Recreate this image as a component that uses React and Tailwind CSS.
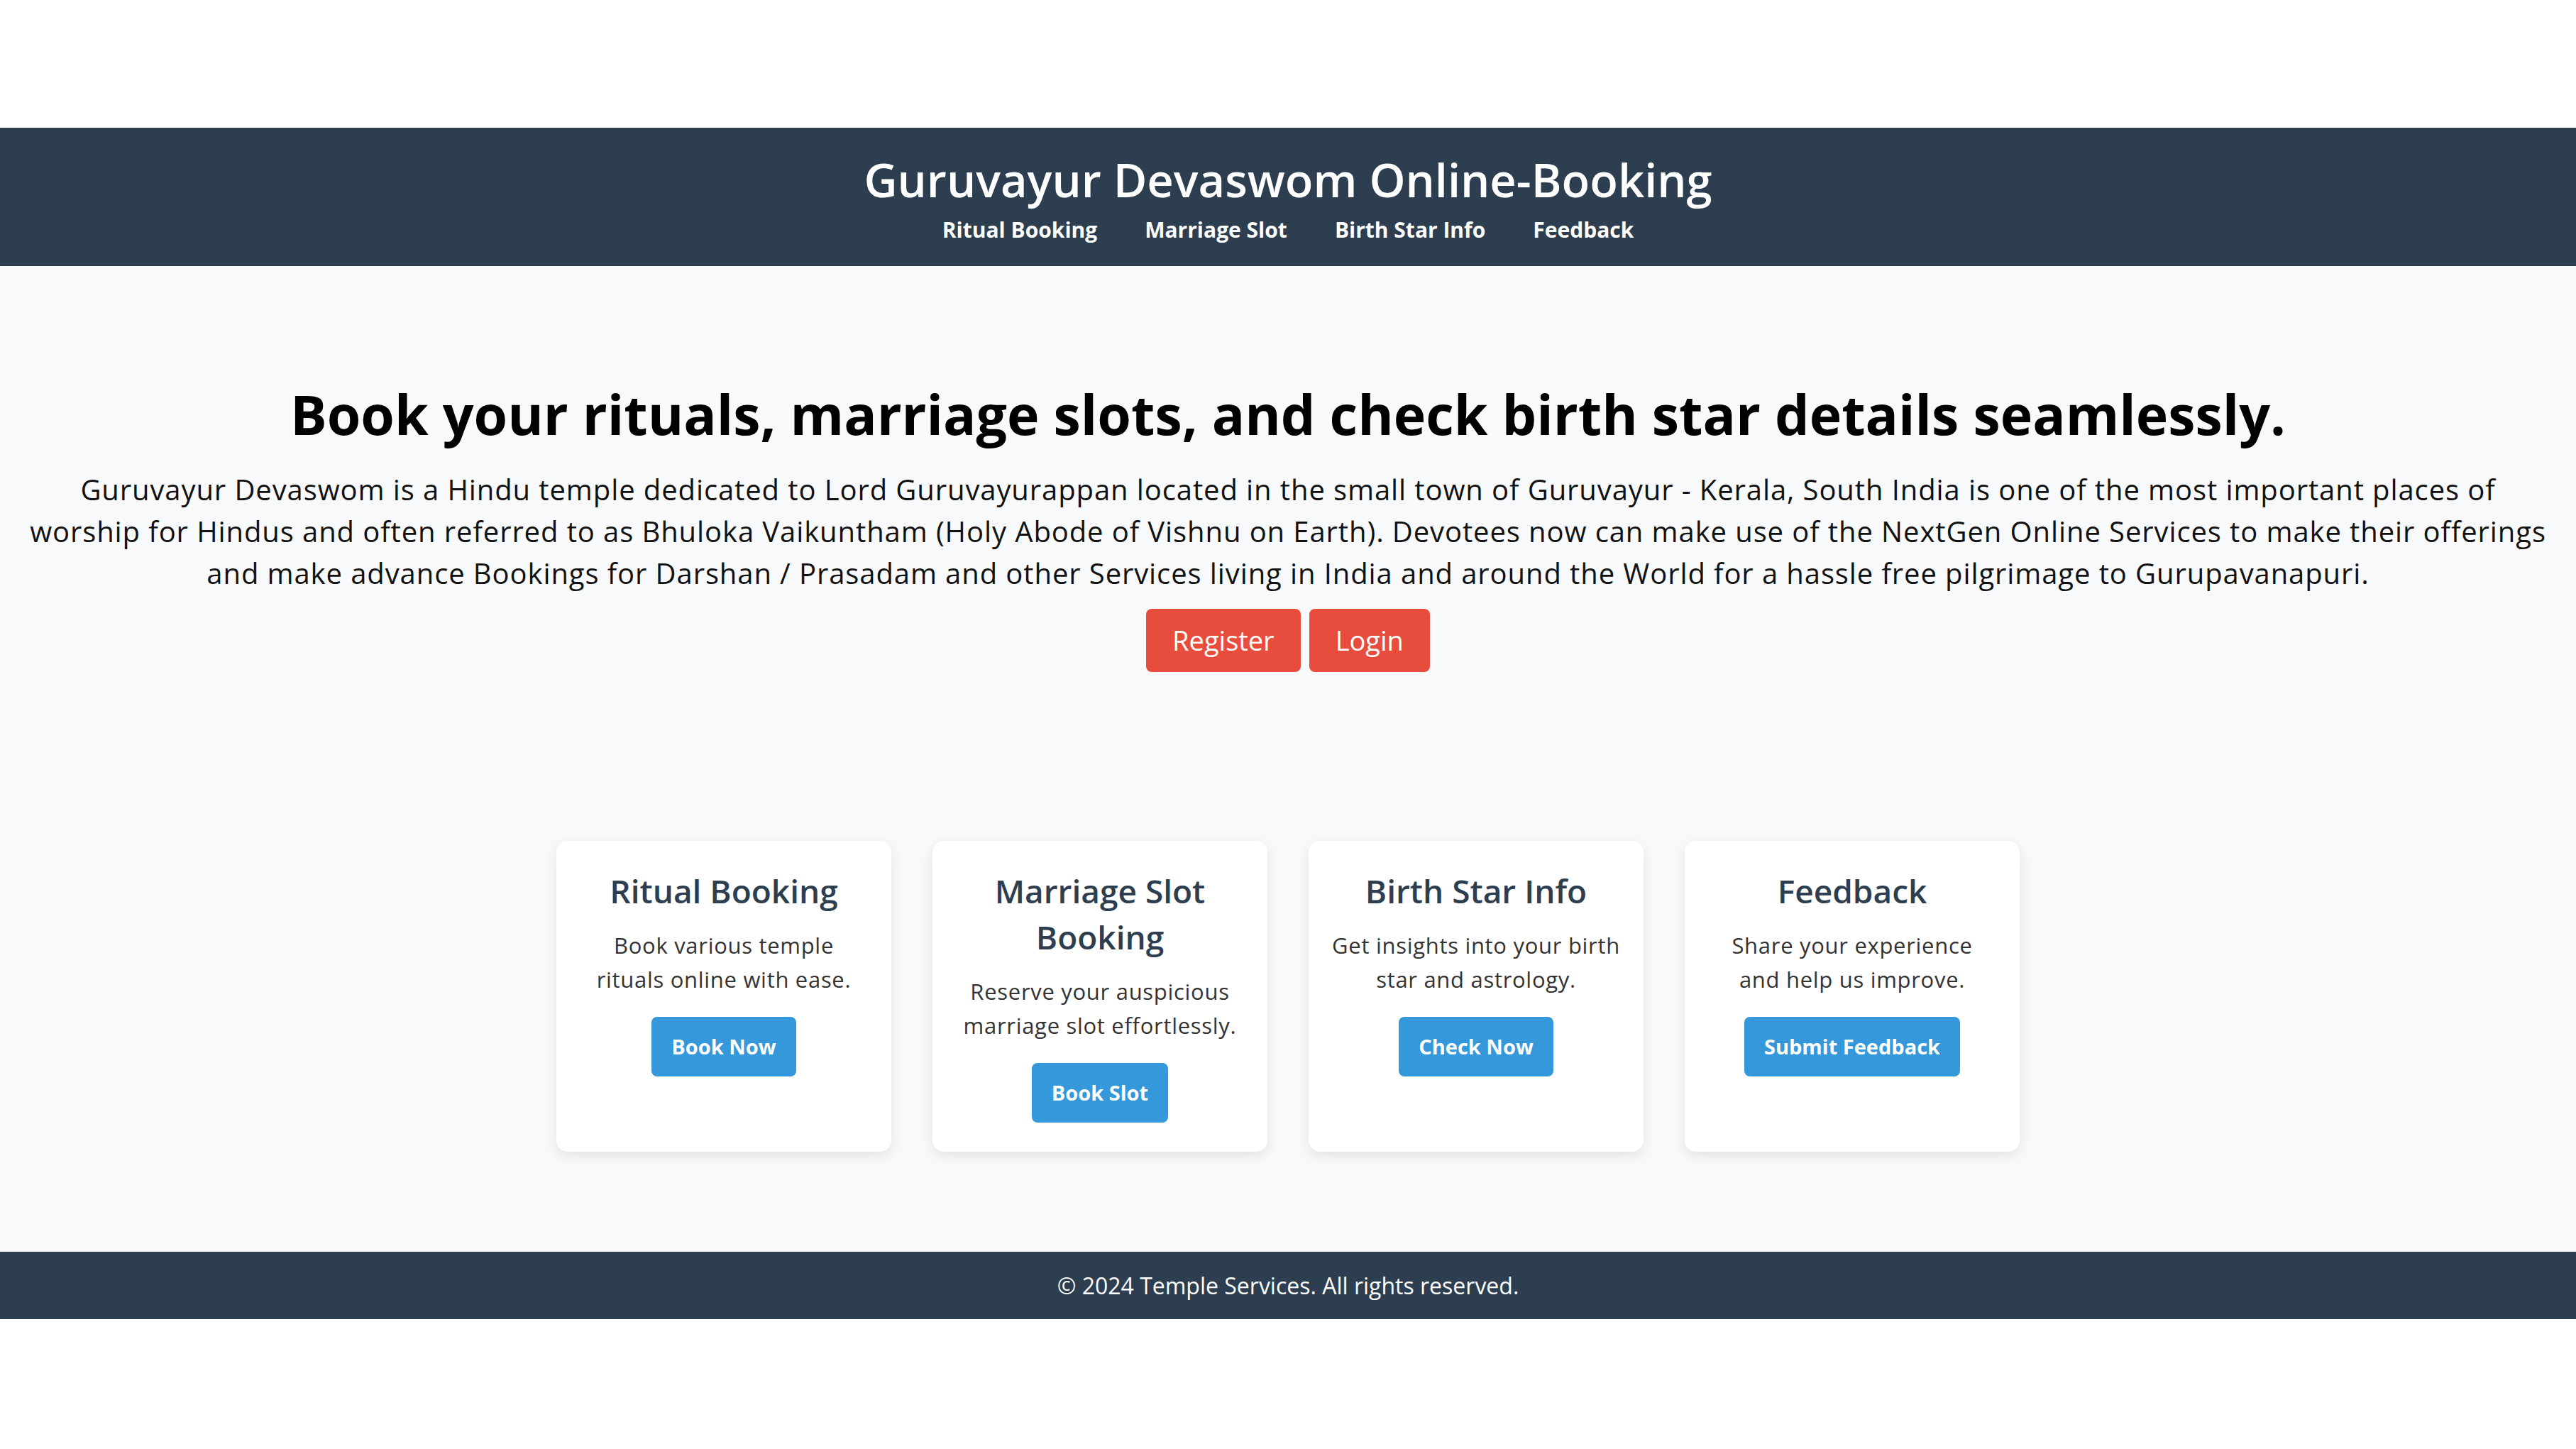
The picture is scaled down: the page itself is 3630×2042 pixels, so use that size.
const navLinks = ['Ritual Booking', 'Marriage Slot', 'Birth Star Info', 'Feedback'];

const services = [
  {
    title: ['Ritual Booking'],
    desc: ['Book various temple', 'rituals online with ease.'],
    action: 'Book Now',
  },
  {
    title: ['Marriage Slot', 'Booking'],
    desc: ['Reserve your auspicious', 'marriage slot effortlessly.'],
    action: 'Book Slot',
  },
  {
    title: ['Birth Star Info'],
    desc: ['Get insights into your birth', 'star and astrology.'],
    action: 'Check Now',
  },
  {
    title: ['Feedback'],
    desc: ['Share your experience', 'and help us improve.'],
    action: 'Submit Feedback',
  },
];

function ServiceCard({ item }) {
  return (
    <div className="w-[472px] rounded-[16px] bg-white px-[24px] pt-[38px] pb-[41px] text-center shadow-[0_6px_18px_rgba(0,0,0,0.09)]">
      <h3 className="text-[46px] leading-[65px] font-semibold text-[#2c3e50]">
        {item.title.map((line) => (
          <span key={line} className="block">
            {line}
          </span>
        ))}
      </h3>
      <p className="mt-[20px] text-[31px] leading-[48px] tracking-[0.7px] text-[#333]">
        {item.desc.map((line) => (
          <span key={line} className="block">
            {line}
          </span>
        ))}
      </p>
      <button className="mt-[29px] h-[84px] rounded-[8px] bg-[#3498db] px-[28px] text-[29px] font-bold text-white">
        {item.action}
      </button>
    </div>
  );
}

export default function App() {
  return (
    <div
      className="min-h-screen bg-white pt-[180px]"
      style={{ fontFamily: '"Open Sans", "Liberation Sans", sans-serif' }}
    >
      {/* cabeçalho */}
      <header className="bg-[#2c3e50] pt-[35px] pb-[31px] text-center text-white">
        <h1 className="text-[65px] leading-[77px] font-semibold">Guruvayur Devaswom Online-Booking</h1>
        <nav className="mt-[12px] flex justify-center gap-[67px]">
          {navLinks.map((link) => (
            <a key={link} href="#" className="text-[30px] leading-[40px] font-bold text-white">
              {link}
            </a>
          ))}
        </nav>
      </header>

      <main className="bg-[#f8f9fa] pt-[163px] pb-[141px]">
        <section className="px-[30px] text-center">
          <h2 className="text-[77px] leading-[91px] font-bold text-black">
            Book your rituals, marriage slots, and check birth star details seamlessly.
          </h2>
          <p className="mt-[31px] text-[40px] leading-[59px] tracking-[0.9px] text-[#111]">
            Guruvayur Devaswom is a Hindu temple dedicated to Lord Guruvayurappan located in the small town of Guruvayur - Kerala, South India is one of the most important places of
            <br />
            worship for Hindus and often referred to as Bhuloka Vaikuntham (Holy Abode of Vishnu on Earth). Devotees now can make use of the NextGen Online Services to make their offerings
            <br />
            and make advance Bookings for Darshan / Prasadam and other Services living in India and around the World for a hassle free pilgrimage to Gurupavanapuri.
          </p>
          <div className="mt-[21px] flex justify-center gap-[12px]">
            <button className="h-[89px] rounded-[8px] bg-[#e74c3c] px-[37px] text-[38px] text-white">Register</button>
            <button className="h-[89px] rounded-[8px] bg-[#e74c3c] px-[37px] text-[38px] text-white">Login</button>
          </div>
        </section>

        <section className="mt-[238px] flex justify-center gap-[58px]">
          {services.map((item) => (
            <ServiceCard key={item.action} item={item} />
          ))}
        </section>
      </main>

      <footer className="flex h-[95px] items-center justify-center bg-[#2c3e50] text-[32px] text-white">
        © 2024 Temple Services. All rights reserved.
      </footer>
    </div>
  );
}
